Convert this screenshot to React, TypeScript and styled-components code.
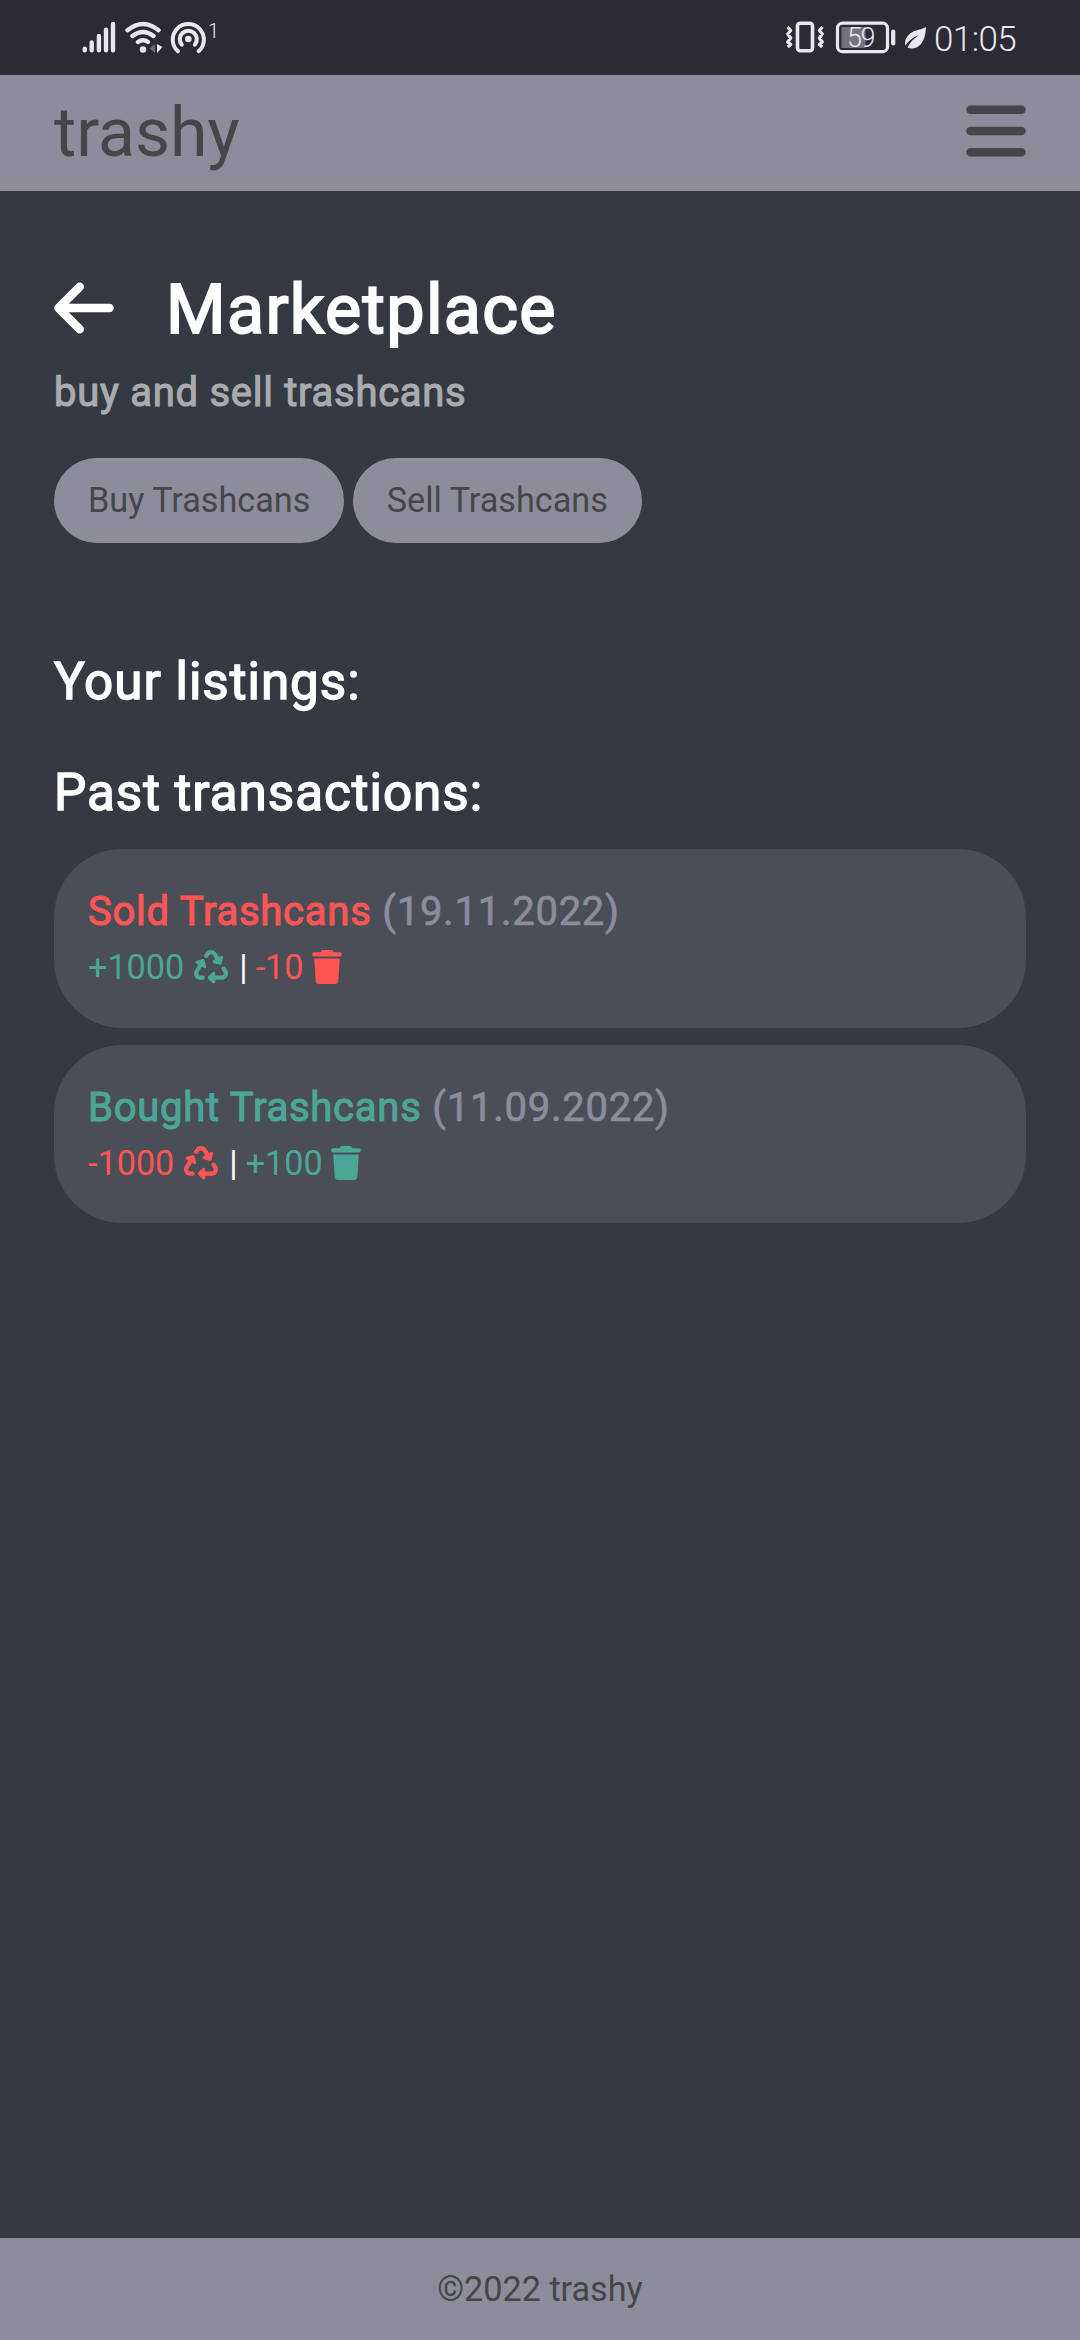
import React from 'react';
import styled, { createGlobalStyle, css } from 'styled-components';
import { FaArrowLeft, FaBars, FaRecycle, FaTrash } from 'react-icons/fa6';

const colors = {
  status: '#2c2a33',
  bar: '#8c8c9b',
  background: '#353941',
  card: '#4a4e57',
  dark: '#464649',
  muted: '#a9abaf',
  date: '#8c8c9b',
  red: '#ff5555',
  green: '#4ca697',
  icon: '#e9e7f0',
};

const GlobalStyle = createGlobalStyle`
  * {
    box-sizing: border-box;
  }
  body {
    margin: 0;
    background: ${colors.background};
    color: #fff;
    font-family: Roboto, sans-serif;
    font-size: 34.2px;
  }
  h1, h2, h3, p {
    margin: 0;
    font-weight: 400;
  }
`;

// regular weight thickened by a thin outline, lighter than a true bold
const thickTextCss = css`
  -webkit-text-stroke: 0.028em currentColor;
  paint-order: stroke fill;
`;

const Page = styled.div`
  display: flex;
  flex-direction: column;
  width: 1080px;
  height: 2340px;
`;

const StatusBar = styled.div`
  display: flex;
  justify-content: space-between;
  height: 75px;
  padding: 0 62px 0 80px;
  background: ${colors.status};
  color: ${colors.icon};
`;

const StatusGroup = styled.div`
  display: flex;
  align-items: flex-start;
  padding-top: 20px;
  svg {
    display: block;
    flex: none;
  }
`;

const HotspotCount = styled.span`
  margin: 1px 0 0;
  font-size: 20px;
  font-weight: 300;
  line-height: 20px;
`;

const Battery = styled.div`
  position: relative;
  width: 62px;
  height: 36px;
  margin: 0 7px 0 10px;
`;

const BatteryLevel = styled.span`
  position: absolute;
  top: 3px;
  left: 12px;
  font-size: 27px;
  font-weight: 300;
  line-height: 30px;
  letter-spacing: -1.5px;
`;

const Clock = styled.span`
  width: 84px;
  margin-left: 6px;
  font-size: 35px;
  font-weight: 300;
  line-height: 39px;
  letter-spacing: -0.6px;
  white-space: nowrap;
`;

const Header = styled.header`
  display: flex;
  align-items: center;
  justify-content: space-between;
  height: 116px;
  padding: 0 54px;
  background: ${colors.bar};
  color: ${colors.dark};
`;

const Brand = styled.span`
  font-size: 68px;
  line-height: 116px;
`;

const largeIconCss = css`
  display: block;
  flex: none;
  width: 60px;
  height: 68px;
`;

const MenuIcon = styled(FaBars)`
  ${largeIconCss};
  margin-top: -5px;
`;

const BackIcon = styled(FaArrowLeft)`
  ${largeIconCss};
  margin-top: -4px;
`;

const Main = styled.main`
  flex: 1;
  padding: 79px 54px 0;
`;

const TitleRow = styled.div`
  display: flex;
  align-items: center;
  gap: 52px;
  height: 80px;
`;

const Title = styled.h1`
  ${thickTextCss};
  font-size: 68.3px;
  line-height: 79px;
  letter-spacing: 1.3px;
`;

const Subtitle = styled.p`
  ${thickTextCss};
  margin-top: 16px;
  color: ${colors.muted};
  font-size: 40px;
  line-height: 54px;
  letter-spacing: 0.72px;
`;

const Buttons = styled.div`
  display: flex;
  gap: 8.5px;
  margin-top: 38px;
`;

const Button = styled.button`
  height: 85px;
  padding: 0 34px 2px;
  border: 0;
  border-radius: 43px;
  background: ${colors.bar};
  color: ${colors.dark};
  font: inherit;
  white-space: nowrap;
`;

const SectionTitle = styled.h2<{ $first?: boolean }>`
  ${thickTextCss};
  margin-top: ${(p) => (p.$first ? '109px' : '51px')};
  font-size: 51.2px;
  line-height: 60px;
  letter-spacing: 0.98px;
`;

const Cards = styled.div`
  display: flex;
  flex-direction: column;
  gap: 17px;
  margin-top: 26px;
`;

const Card = styled.section`
  height: 178.5px;
  padding: 34px;
  border-radius: 68px;
  background: ${colors.card};
`;

const toneCss = css<{ $gain: boolean }>`
  color: ${(p) => (p.$gain ? colors.green : colors.red)};
`;

const CardTitle = styled.h3<{ $gain: boolean }>`
  ${toneCss};
  ${thickTextCss};
  font-size: 40px;
  line-height: 58px;
  letter-spacing: 0.75px;
`;

const CardDate = styled.span`
  color: ${colors.date};
  -webkit-text-stroke: 0.018em currentColor;
`;

const Amounts = styled.div`
  display: flex;
  align-items: center;
  height: 52px;
  line-height: 52px;
`;

const Amount = styled.span<{ $gain: boolean }>`
  ${toneCss};
  display: flex;
  align-items: center;
`;

const CoinIcon = styled(FaRecycle)`
  width: 34px;
  height: 34px;
  margin-left: 10px;
`;

const CanIcon = styled(FaTrash)`
  width: 30px;
  height: 34px;
  margin-left: 8px;
`;

const Divider = styled.span`
  margin: 0 8px 0 11px;
`;

const Footer = styled.footer`
  height: 102px;
  background: ${colors.bar};
  color: ${colors.dark};
  line-height: 102px;
  text-align: center;
`;

const SignalIcon = () => (
  <svg width="42" height="36" viewBox="80 20 42 36" stroke="currentColor" strokeWidth="4.4" strokeLinecap="round">
    <path d="M84.8 48.6v1.6M91.7 42.4v7.8M98.9 36v14.2M106 29.6v20.6M113 24v26.2" />
  </svg>
);

const WifiIcon = () => (
  <svg width="46" height="36" viewBox="122 20 46 36" fill="none" stroke="currentColor" strokeWidth="4.4" strokeLinecap="round">
    <path d="M127.5 30.2Q143 18 158.5 30.2M132.5 36Q143 28 153.5 36M138 42Q143 38.6 148 42" />
    <circle cx="143" cy="49.5" r="3.2" fill="currentColor" stroke="none" />
    <path d="M157 44v9l5.5-6z" fill="currentColor" stroke="none" />
    <path d="M155 44v9l-5.5-4.5z" fill="#6f6d76" stroke="none" />
  </svg>
);

const HotspotIcon = () => (
  <svg width="40" height="36" viewBox="168 20 40 36" fill="none" stroke="currentColor" strokeWidth="4" strokeLinecap="round">
    <path d="M178 51.3A15.6 15.6 0 1 1 198.6 51.3M181.8 44.7A8.5 8.5 0 1 1 194.8 44.7" />
    <circle cx="188.3" cy="39" r="3.3" fill="currentColor" stroke="none" />
  </svg>
);

const VibrateIcon = () => (
  <svg width="40" height="36" viewBox="785 20 40 36" fill="none" stroke="currentColor">
    <rect x="797.5" y="23.3" width="15" height="27.4" rx="2.5" strokeWidth="3.6" />
    <path
      d="M787.5 27l3.2 3.5-3 3.5 3 4-3 4 3 2.5-3 2.5M822.5 27l-3.2 3.5 3 3.5-3 4 3 4-3 2.5 3 2.5"
      strokeWidth="3.2"
      strokeLinejoin="round"
    />
  </svg>
);

const BatteryIcon = () => (
  <svg width="62" height="36" viewBox="835 20 62 36" fill="none" stroke="currentColor">
    <rect x="837.5" y="23.2" width="50" height="28.5" rx="5" strokeWidth="3.2" />
    <rect x="841.5" y="27" width="24" height="21" fill="#74727c" stroke="none" />
    <path d="M893.2 31.5v12" strokeWidth="4.2" strokeLinecap="round" />
  </svg>
);

const LeafIcon = () => (
  <svg width="24" height="36" viewBox="904 20 24 36" fill="currentColor">
    <path d="M926 27c-6 3.5-12 2.5-17 7.5-4 4-4.5 8-3.5 11 3-5 8-8.5 13.5-10.5-5 3.5-9 7-11.5 12.5 4 2 9.5 1 13-3 4.5-5 5-11 5.5-17.5z" />
  </svg>
);

interface Transaction {
  title: string;
  date: string;
  coins: string;
  cans: string;
  bought: boolean;
}

const transactions: Transaction[] = [
  { title: 'Sold Trashcans', date: '19.11.2022', coins: '+1000', cans: '-10', bought: false },
  { title: 'Bought Trashcans', date: '11.09.2022', coins: '-1000', cans: '+100', bought: true },
];

const TransactionCard: React.FC<Transaction> = ({ title, date, coins, cans, bought }) => (
  <Card>
    <CardTitle $gain={bought}>
      {title} <CardDate>({date})</CardDate>
    </CardTitle>
    <Amounts>
      <Amount $gain={!bought}>
        {coins}
        <CoinIcon />
      </Amount>
      <Divider>|</Divider>
      <Amount $gain={bought}>
        {cans}
        <CanIcon />
      </Amount>
    </Amounts>
  </Card>
);

const App: React.FC = () => (
  <Page>
    <GlobalStyle />
    <StatusBar>
      <StatusGroup>
        <SignalIcon />
        <WifiIcon />
        <HotspotIcon />
        <HotspotCount>1</HotspotCount>
      </StatusGroup>
      <StatusGroup>
        <VibrateIcon />
        <Battery>
          <BatteryIcon />
          <BatteryLevel>59</BatteryLevel>
        </Battery>
        <LeafIcon />
        <Clock>01:05</Clock>
      </StatusGroup>
    </StatusBar>
    <Header>
      <Brand>trashy</Brand>
      <MenuIcon />
    </Header>
    <Main>
      <TitleRow>
        <BackIcon />
        <Title>Marketplace</Title>
      </TitleRow>
      <Subtitle>buy and sell trashcans</Subtitle>
      <Buttons>
        <Button>Buy Trashcans</Button>
        <Button>Sell Trashcans</Button>
      </Buttons>
      <SectionTitle $first>Your listings:</SectionTitle>
      <SectionTitle>Past transactions:</SectionTitle>
      <Cards>
        {transactions.map((transaction) => (
          <TransactionCard key={transaction.date} {...transaction} />
        ))}
      </Cards>
    </Main>
    <Footer>©2022 trashy</Footer>
  </Page>
);

export default App;
